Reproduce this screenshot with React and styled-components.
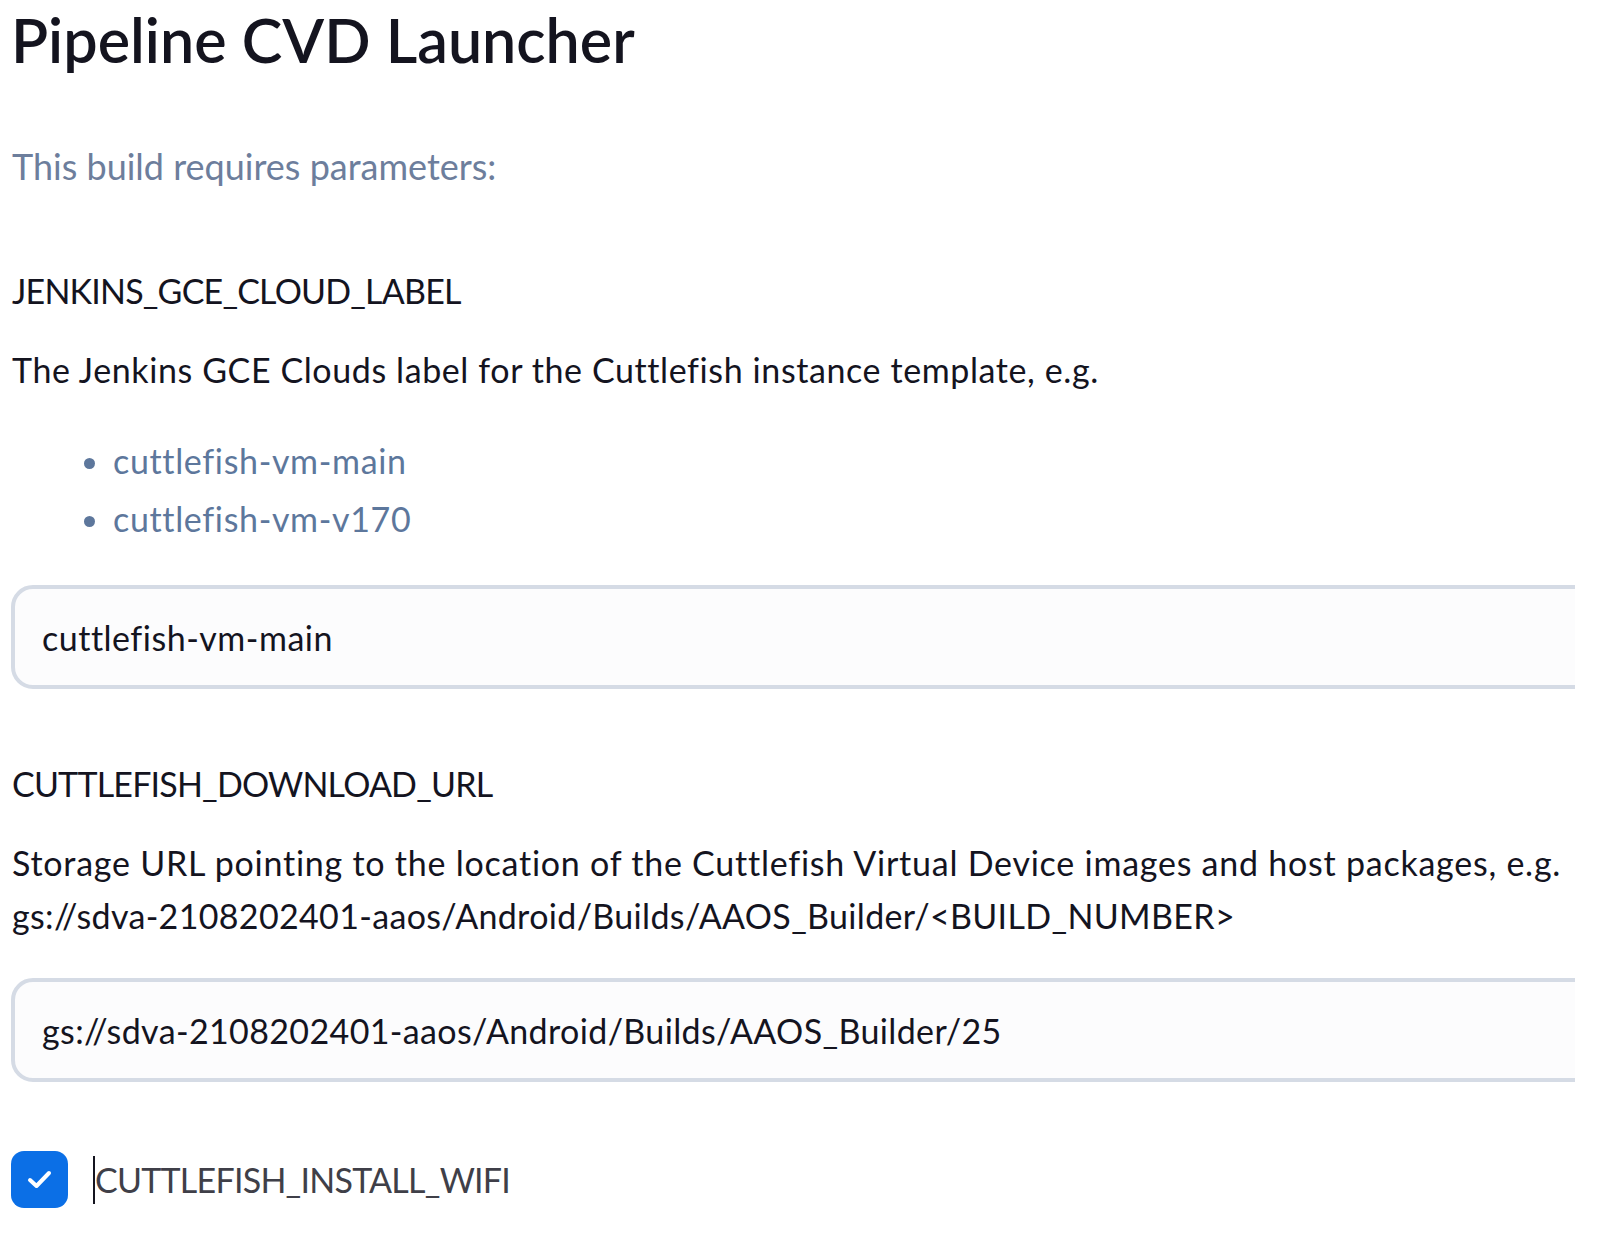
import React from 'react';
import styled, { createGlobalStyle } from 'styled-components';

const GlobalStyle = createGlobalStyle`
  body {
    margin: 0;
    background: #fff;
    font-family: Lato, "Noto Sans", sans-serif;
    color: #14141f;
  }
`;

const Page = styled.div`
  width: 1575px;
  overflow: hidden;
  padding: 0 0 40px 11px;
  box-sizing: border-box;
`;

const Title = styled.h1`
  margin: 0;
  padding-top: 2px;
  font-size: 61px;
  line-height: 76px;
  font-weight: 600;
  color: #14141f;
`;

const Subtitle = styled.p`
  margin: 64px 0 0 1px;
  font-size: 36px;
  line-height: 48px;
  color: #6d7e9c;
`;

const Param = styled.div`
  margin-top: ${p => p.$gap || 0}px;
`;

const ParamName = styled.div`
  margin-left: 1px;
  font-size: 34px;
  line-height: 48px;
  letter-spacing: -0.8px;
  color: #14141f;
`;

const Description = styled.div`
  margin: 28px 0 0 1px;
  font-size: 34px;
  line-height: 53px;
  letter-spacing: ${p => p.$spacing || 0.6}px;
  color: #14141f;
`;

const Example = styled.span`
  letter-spacing: 0.34px;
`;

const Options = styled.ul`
  margin: 36px 0 0;
  padding-left: 102px;
  font-size: 34px;
  line-height: 58px;
  letter-spacing: 0.65px;
  color: #5d779c;

  li::marker {
    color: #5d779c;
  }
`;

const TextInput = styled.input`
  display: block;
  width: 1700px;
  height: 104px;
  margin-top: ${p => p.$gap || 0}px;
  padding: 0 0 0 27px;
  box-sizing: border-box;
  border: 4px solid #d5dbe5;
  border-radius: 22px;
  background: #fcfcfd;
  font-family: Lato, "Noto Sans", sans-serif;
  font-size: 34px;
  letter-spacing: ${p => p.$spacing || 0.5}px;
  color: #14141f;
  outline: none;
`;

const CheckRow = styled.label`
  display: flex;
  align-items: center;
  gap: 25px;
  margin-top: 69px;
`;

const CheckBox = styled.span`
  display: flex;
  align-items: center;
  justify-content: center;
  width: 57px;
  height: 57px;
  border-radius: 13px;
  background: #0b6fe6;
`;

const CheckLabel = styled.span`
  border-left: 2px solid #14141f;
  font-size: 34px;
  line-height: 48px;
  letter-spacing: -0.75px;
  color: #3f3f48;
`;

export default function App() {
  return (
    <>
      <GlobalStyle />
      <Page>
        <Title>Pipeline CVD Launcher</Title>
        <Subtitle>This build requires parameters:</Subtitle>

        <Param $gap={77}>
          <ParamName>JENKINS_GCE_CLOUD_LABEL</ParamName>
          <Description>
            The Jenkins GCE Clouds label for the Cuttlefish instance template, e.g.
          </Description>
          <Options>
            <li>cuttlefish-vm-main</li>
            <li>cuttlefish-vm-v170</li>
          </Options>
          <TextInput $gap={37} defaultValue="cuttlefish-vm-main" />
        </Param>

        <Param $gap={71}>
          <ParamName>CUTTLEFISH_DOWNLOAD_URL</ParamName>
          <Description $spacing={0.76}>
            Storage URL pointing to the location of the Cuttlefish Virtual Device images and host packages, e.g.
            <br />
            <Example>gs://sdva-2108202401-aaos/Android/Builds/AAOS_Builder/&lt;BUILD_NUMBER&gt;</Example>
          </Description>
          <TextInput
            $gap={36}
            $spacing={0.37}
            defaultValue="gs://sdva-2108202401-aaos/Android/Builds/AAOS_Builder/25"
          />
        </Param>

        <CheckRow>
          <CheckBox>
            <svg width="27" height="21" viewBox="0 0 27 21" fill="none">
              <path d="M4 11l6.5 6L23 4" stroke="#fff" strokeWidth="4" strokeLinecap="round" strokeLinejoin="round" />
            </svg>
          </CheckBox>
          <CheckLabel>CUTTLEFISH_INSTALL_WIFI</CheckLabel>
        </CheckRow>
      </Page>
    </>
  );
}
